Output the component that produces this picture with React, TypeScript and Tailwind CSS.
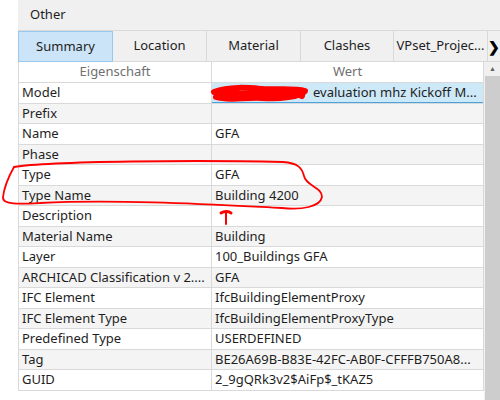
import React from 'react';

type Row = { name: string; value: string };

const rows: Row[] = [
  { name: 'Model', value: '' },
  { name: 'Prefix', value: '' },
  { name: 'Name', value: 'GFA' },
  { name: 'Phase', value: '' },
  { name: 'Type', value: 'GFA' },
  { name: 'Type Name', value: 'Building 4200' },
  { name: 'Description', value: '' },
  { name: 'Material Name', value: 'Building' },
  { name: 'Layer', value: '100_Buildings GFA' },
  { name: 'ARCHICAD Classification v 2....', value: 'GFA' },
  { name: 'IFC Element', value: 'IfcBuildingElementProxy' },
  { name: 'IFC Element Type', value: 'IfcBuildingElementProxyType' },
  { name: 'Predefined Type', value: 'USERDEFINED' },
  { name: 'Tag', value: 'BE26A69B-B83E-42FC-AB0F-CFFFB750A8...' },
  { name: 'GUID', value: '2_9gQRk3v2$AiFp$_tKAZ5' },
];

const tabs = [
  { label: 'Summary', w: 'w-[95px]', active: true },
  { label: 'Location', w: 'w-[94px]' },
  { label: 'Material', w: 'w-[94px]' },
  { label: 'Clashes', w: 'w-[93px]' },
  { label: 'VPset_Projec...', w: 'w-[94px]' },
];

const Annotations = () => (
  <svg className="absolute inset-0 pointer-events-none" width={500} height={400} viewBox="0 0 500 400">
    {/* scribble over the model name */}
    <path
      d="M214 92 C230 86 250 88 262 89 C278 90 295 88 305 91 C300 97 280 99 262 98 C245 97 228 101 216 97 C225 93 250 94 270 93 C285 92 298 94 302 96"
      fill="none"
      stroke="#ff0000"
      strokeWidth={6}
      strokeLinecap="round"
      strokeLinejoin="round"
    />
    {/* ring around Type / Type Name */}
    <path
      d="M14 167 C50 161 200 160 283 162 C298 163 302 168 304 176 C306 186 322 187 322 197 C320 207 302 210 282 208 C220 205 120 199 40 203 C20 204 2 205 3 197 C4 188 9 176 14 167"
      fill="none"
      stroke="#ff0000"
      strokeWidth={1.8}
      strokeLinecap="round"
    />
    {/* marker under Building 4200 */}
    <path d="M221 213 C224 211 229 211 231 213" fill="none" stroke="#ff0000" strokeWidth={3} strokeLinecap="round" />
    <path d="M226 213 L226 224" fill="none" stroke="#ff0000" strokeWidth={2} strokeLinecap="round" />
  </svg>
);

export default function App() {
  return (
    <div className="relative w-[500px] h-[400px] overflow-hidden bg-white flex text-[13px] text-[#1e1e1e] font-['Segoe_UI','Noto_Sans','Open_Sans',sans-serif]">
      <div className="w-[18px] shrink-0 bg-white" />
      <div className="flex-1 flex flex-col bg-[#f0f0f0]">
        <div className="h-[30px] flex items-center pl-[12px] text-[13px]">Other</div>

        <div className="h-[32px] flex border-t border-[#d9d9d9]">
          {tabs.map((t) => (
            <div
              key={t.label}
              className={`${t.w} shrink-0 flex items-center justify-center border-r ${
                t.active ? 'bg-[#cce4f7] border border-[#99c9ef]' : 'bg-[#f0f0f0] border-[#d9d9d9] border-b'
              }`}
            >
              {t.label}
            </div>
          ))}
          <div className="flex-1 flex items-center justify-center font-bold text-[14px] text-black border-b border-[#d9d9d9]">
            ❯
          </div>
        </div>

        <div className="flex flex-1">
          <div className="w-[466px] shrink-0 flex flex-col bg-white">
            <div className="border-l border-r border-b border-[#d9d9d9]">
              <div className="flex h-[20px] text-[#707070]">
                <div className="w-[193px] flex items-center justify-center border-r border-[#d9d9d9]">Eigenschaft</div>
                <div className="flex-1 flex items-center justify-center">Wert</div>
              </div>
              {rows.map((r, i) => {
                const sel = i === 0;
                return (
                  <div
                    key={r.name}
                    className={`flex h-[20.5px] border-t border-[#d9d9d9] ${i % 2 === 1 ? 'bg-[#f4f4f4]' : 'bg-white'}`}
                  >
                    <div className="w-[193px] flex items-center pl-[3px] border-r border-[#d9d9d9] whitespace-nowrap overflow-hidden">
                      {r.name}
                    </div>
                    {sel ? (
                      <div className="flex-1 flex items-center bg-[#cde8f7] border-b border-[#4aa3df] whitespace-nowrap overflow-hidden">
                        <span className="pl-[101px]">evaluation mhz Kickoff M...</span>
                      </div>
                    ) : (
                      <div className="flex-1 flex items-center pl-[3px] whitespace-nowrap overflow-hidden">{r.value}</div>
                    )}
                  </div>
                );
              })}
            </div>
          </div>
          <div className="w-[1px]" />
          <div className="flex-1 flex flex-col">
            <div className="h-[14px] flex items-center justify-center text-[7px] text-[#606060]">▲</div>
            <div className="flex-1 bg-[#cdcdcd]" />
          </div>
        </div>
      </div>
      <Annotations />
    </div>
  );
}
